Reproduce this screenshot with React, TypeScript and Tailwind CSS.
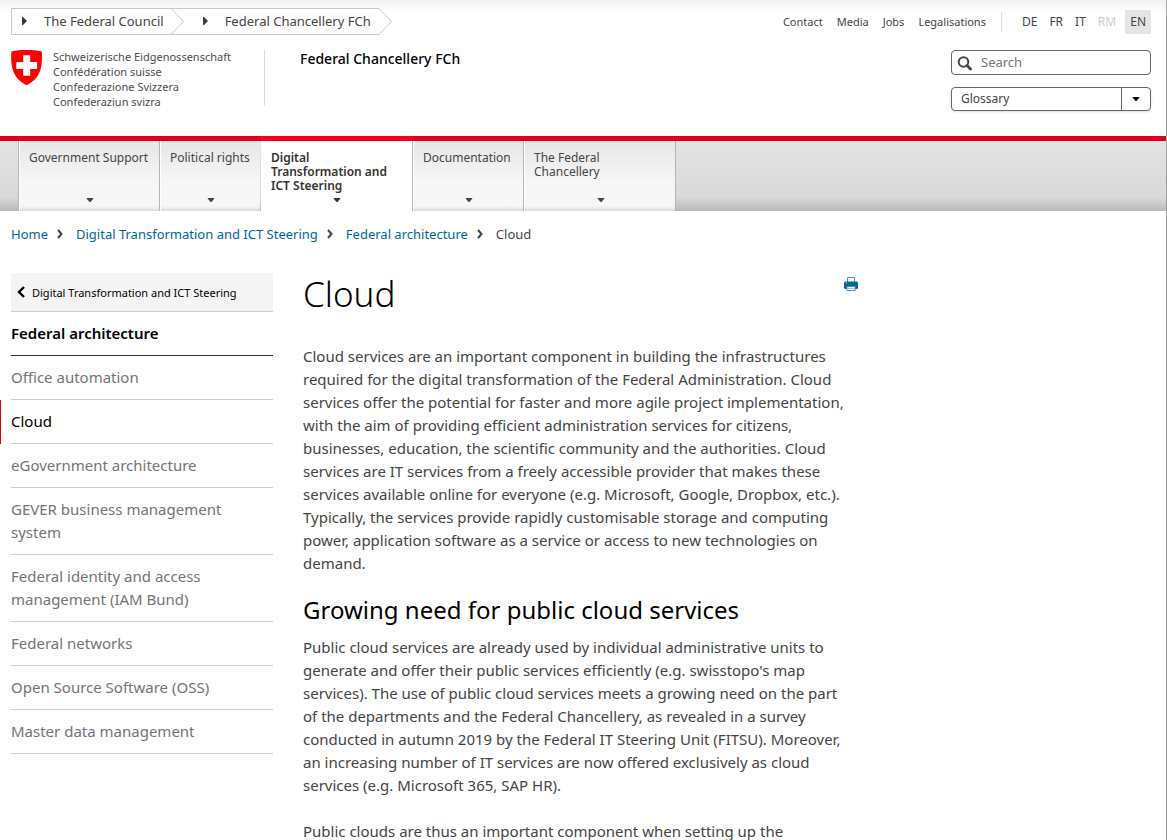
import React from "react";

const navItems = [
  { label: "Government Support", width: "w-[141px]" },
  { label: "Political rights", width: "w-[101px]" },
  { label: "Digital Transformation and ICT Steering", width: "w-[152px]", active: true },
  { label: "Documentation", width: "w-[111px]" },
  { label: "The Federal Chancellery", width: "w-[152px]" },
];

const sideItems = [
  "Office automation",
  "Cloud",
  "eGovernment architecture",
  "GEVER business management system",
  "Federal identity and access management (IAM Bund)",
  "Federal networks",
  "Open Source Software (OSS)",
  "Master data management",
];

const crumbs = ["Home", "Digital Transformation and ICT Steering", "Federal architecture"];

function CaretDown({ className }: { className: string }) {
  return (
    <svg className={className} width="8" height="4" viewBox="0 0 8 4" aria-hidden="true">
      <path d="M0.5 0h7L7 1 4.5 4h-1L1 1z" fill="currentColor" />
    </svg>
  );
}

function CaretRight() {
  return (
    <svg className="shrink-0" width="5" height="8" viewBox="0 0 5 8" aria-hidden="true">
      <path d="M0 0h1l4 4-4 4H0z" fill="#333b45" />
    </svg>
  );
}

function Chevron({ flip = false, className = "" }: { flip?: boolean; className?: string }) {
  return (
    <svg className={className} width="8" height="12" viewBox="0 0 8 12" aria-hidden="true">
      <path
        d={flip ? "M7 1L2 6l5 5" : "M2 2l3.5 4L2 10"}
        fill="none"
        stroke="currentColor"
        strokeWidth={flip ? 2.4 : 2}
      />
    </svg>
  );
}

function OrgCrumb({ label, first = false }: { label: string; first?: boolean }) {
  return (
    <li className="flex">
      <a
        href="#"
        className={
          first
            ? "flex h-[27px] items-center gap-[17px] border-y border-l border-[#c8c8c8] pb-0.5 pl-2.5 pr-[7px] text-[13px] leading-5"
            : "flex h-[27px] items-center gap-[17px] border-y border-[#c8c8c8] pb-0.5 pl-[18px] pr-2 text-[13px] leading-5"
        }
      >
        <CaretRight />
        {label}
      </a>
      <svg width="14" height="27" viewBox="0 0 14 27" aria-hidden="true">
        <path d="M0 0.5L12.5 13.5L0 26.5" fill="none" stroke="#c8c8c8" />
        {first && <path d="M0 0.5H14M0 26.5H14" stroke="#c8c8c8" />}
      </svg>
    </li>
  );
}

function Logo() {
  return (
    <a href="#" className="flex gap-2.5 text-[#4d4d4d]">
      <svg width="32" height="36" viewBox="0 0 32 36" aria-hidden="true">
        <path
          d="M0.4 1.6C5 0.3 10.5 0 15.6 0s10.6 0.3 15.2 1.6C31.3 8 31.2 14.5 29.2 20.5 27 27.5 21.5 32.3 15.6 35.2 9.7 32.3 4.2 27.5 2 20.5 0 14.5-0.1 8 0.4 1.6z"
          fill="#f00"
        />
        <path d="M12.2 5.2h7v6.900h6.900v6.800h-6.900v6.900h-7v-6.900H5.300v-6.800h6.900z" fill="#fff" />
      </svg>
      <span className="-mt-px text-[11px] leading-[15px]">
        Schweizerische Eidgenossenschaft
        <br />
        Confédération suisse
        <br />
        Confederazione Svizzera
        <br />
        Confederaziun svizra
      </span>
    </a>
  );
}

function Header() {
  return (
    <header className="bg-gradient-to-b from-[#f2f2f2] to-white to-[12px] pl-[11px] pr-[15px]">
      <div className="flex h-[136px] justify-between">
        <div className="pt-2">
          <ol className="flex">
            <OrgCrumb label="The Federal Council" first />
            <OrgCrumb label="Federal Chancellery FCh" />
          </ol>
          <div className="mt-[15px] flex h-14">
            <div className="w-[254px] border-r border-[#dcdcdc]">
              <Logo />
            </div>
            <p className="pl-[35px] text-[14px] font-medium leading-[18px] text-black">
              Federal Chancellery FCh
            </p>
          </div>
        </div>
        <div className="flex flex-col items-end pt-2.5">
          <div className="flex h-6 items-center">
            <nav className="flex gap-3.5 text-[11px] leading-6">
              <a href="#">Contact</a>
              <a href="#">Media</a>
              <a href="#">Jobs</a>
              <a href="#">Legalisations</a>
            </nav>
            <ul className="ml-[15px] flex items-center border-l border-[#dcdcdc] pl-[14px] text-[12px] leading-5">
              <li className="px-1.5"><a href="#">DE</a></li>
              <li className="px-1.5"><a href="#">FR</a></li>
              <li className="px-1.5"><a href="#">IT</a></li>
              <li className="px-1.5 text-[#cfcfcf]">RM</li>
            </ul>
            <a href="#" className="ml-[3px] bg-[#e5e5e5] px-[5px] py-0.5 text-[12px] leading-5">EN</a>
          </div>
          <form className="mt-4 flex h-[25px] w-[200px] items-center rounded-[4px] border border-[#666] bg-white pl-[5px]">
            <svg className="mt-0.5" width="15" height="15" viewBox="0 0 15 15" aria-hidden="true">
              <circle cx="6.5" cy="6" r="4.8" fill="none" stroke="#444" strokeWidth="2" />
              <path d="M10 9.5l3.5 3.5" stroke="#444" strokeWidth="2.8" strokeLinecap="round" />
            </svg>
            <input
              type="text"
              aria-label="Search"
              placeholder="Search"
              className="ml-[9px] min-w-0 flex-1 bg-transparent pb-0.5 text-[13px] leading-5 outline-none placeholder:text-[#757575]"
            />
          </form>
          <button
            type="button"
            className="mt-3 flex h-6 w-[200px] items-center rounded-[4px] border border-[#666] bg-white text-left text-[12px] leading-[18px] shadow-sm"
          >
            <span className="flex-1 pl-[9px]">Glossary</span>
            <span className="flex h-full w-[29px] items-center justify-center border-l border-[#666] text-black">
              <CaretDown className="" />
            </span>
          </button>
        </div>
      </div>
    </header>
  );
}

function MainNav() {
  return (
    <nav className="h-[75px] border-t-[5px] border-[#dc0018] bg-gradient-to-b from-[#e3e3e3] via-[#d9d9d9] via-80% to-[#bababa] pl-[18px]">
      <ul className="flex h-[70px]">
        {navItems.map((item) => (
          <li key={item.label} className={`flex shrink-0 ${item.width}`}>
            <a
              href="#"
              className={
                item.active
                  ? "-mt-[5px] ml-px flex flex-1 flex-col justify-between border-t-[5px] border-[#f7001d] bg-white px-[10px] pb-[9px] pt-2.5 text-[12px] font-semibold leading-[14px] text-[#333]"
                  : "flex flex-1 flex-col justify-between border-l border-[#b5b5b5] bg-gradient-to-b from-[#e6e6e6] via-[#f7f7f7] via-60% to-[#f7f7f7] to-90% pb-[9px] pl-[10px] pr-2 pt-2.5 text-[12px] leading-[14px] shadow-[inset_1px_0_0_#fff,inset_0_-5px_5px_-4px_#c8c8c8]"
              }
            >
              {item.label}
              <CaretDown className="self-center" />
            </a>
          </li>
        ))}
        <li className="w-px bg-[#b5b5b5]" />
      </ul>
    </nav>
  );
}

function Breadcrumb() {
  return (
    <nav aria-label="Breadcrumb" className="px-[11px] pt-[13px]">
      <ol className="flex text-[13px] leading-5">
        {crumbs.map((c) => (
          <li key={c} className="flex items-center">
            <a href="#" className="text-[#069]">{c}</a>
            <Chevron className="ml-2 mr-3" />
          </li>
        ))}
        <li>Cloud</li>
      </ol>
    </nav>
  );
}

function Sidebar() {
  return (
    <aside className="w-[273px] shrink-0 text-[15px] leading-[23px] text-[#757575]">
      <a
        href="#"
        className="ml-[11px] flex h-[39px] items-center gap-[7px] border-b border-[#ccc] bg-[#f4f4f4] pl-1.5 text-[11px] text-black"
      >
        <Chevron flip />
        Digital Transformation and ICT Steering
      </a>
      <a href="#" className="ml-[11px] block border-b border-[#333] pb-2.5 pt-2.5 font-semibold text-black">
        Federal architecture
      </a>
      <ul>
        {sideItems.map((item) => (
          <li
            key={item}
            className={item === "Cloud" ? "border-l border-[#dc0018] pl-2.5 text-black" : "pl-[11px]"}
          >
            <a href="#" className="block border-b border-[#ccc] py-2.5">{item}</a>
          </li>
        ))}
      </ul>
    </aside>
  );
}

function Article() {
  return (
    <main className="ml-[30px] w-[555px] text-[15px] leading-[23px]">
      <div className="flex items-start justify-between">
        <h1 className="text-[35px] font-light leading-[42px] text-black">Cloud</h1>
        <button type="button" aria-label="Print" className="mt-1">
          <svg width="14" height="14" viewBox="0 0 14 14" aria-hidden="true">
            <path d="M3.5 5V0.5h7V5" fill="#fff" stroke="#4d94bd" />
            <rect x="0" y="4.5" width="14" height="7.5" rx="1.5" fill="#069" />
            <path d="M1.5 6h1.5" stroke="#9cc3da" />
            <rect x="3" y="9.5" width="8" height="4" fill="#fff" stroke="#4d94bd" />
            <path d="M4 11.5h6" stroke="#9cc3da" />
          </svg>
        </button>
      </div>
      <p className="mt-[30px] pr-1">
        Cloud services are an important component in building the infrastructures required for the
        digital transformation of the Federal Administration. Cloud services offer the potential for
        faster and more agile project implementation, with the aim of providing efficient
        administration services for citizens, businesses, education, the scientific community and the
        authorities. Cloud services are IT services from a freely accessible provider that makes these
        services available online for everyone (e.g. Microsoft, Google, Dropbox, etc.). Typically, the
        services provide rapidly customisable storage and computing power, application software as a
        service or access to new technologies on demand.
      </p>
      <h2 className="mt-5 text-[24px] leading-[30px] text-black">
        Growing need for public cloud services
      </h2>
      <p className="mt-[11px] pr-1">
        Public cloud services are already used by individual administrative units to generate and
        offer their public services efficiently (e.g. swisstopo's map services). The use of public
        cloud services meets a growing need on the part of the departments and the Federal
        Chancellery, as revealed in a survey conducted in autumn 2019 by the Federal IT Steering Unit
        (FITSU). Moreover, an increasing number of IT services are now offered exclusively as cloud
        services (e.g. Microsoft 365, SAP HR).
      </p>
      <p className="mt-[23px]">Public clouds are thus an important component when setting up the</p>
    </main>
  );
}

export default function App() {
  return (
    <div className="h-screen overflow-hidden border-r border-[#a3a39b] bg-white font-['Noto_Sans','Open_Sans',sans-serif] text-[#454545]">
      <Header />
      <MainNav />
      <Breadcrumb />
      <div className="flex pt-[29px]">
        <Sidebar />
        <Article />
      </div>
    </div>
  );
}
